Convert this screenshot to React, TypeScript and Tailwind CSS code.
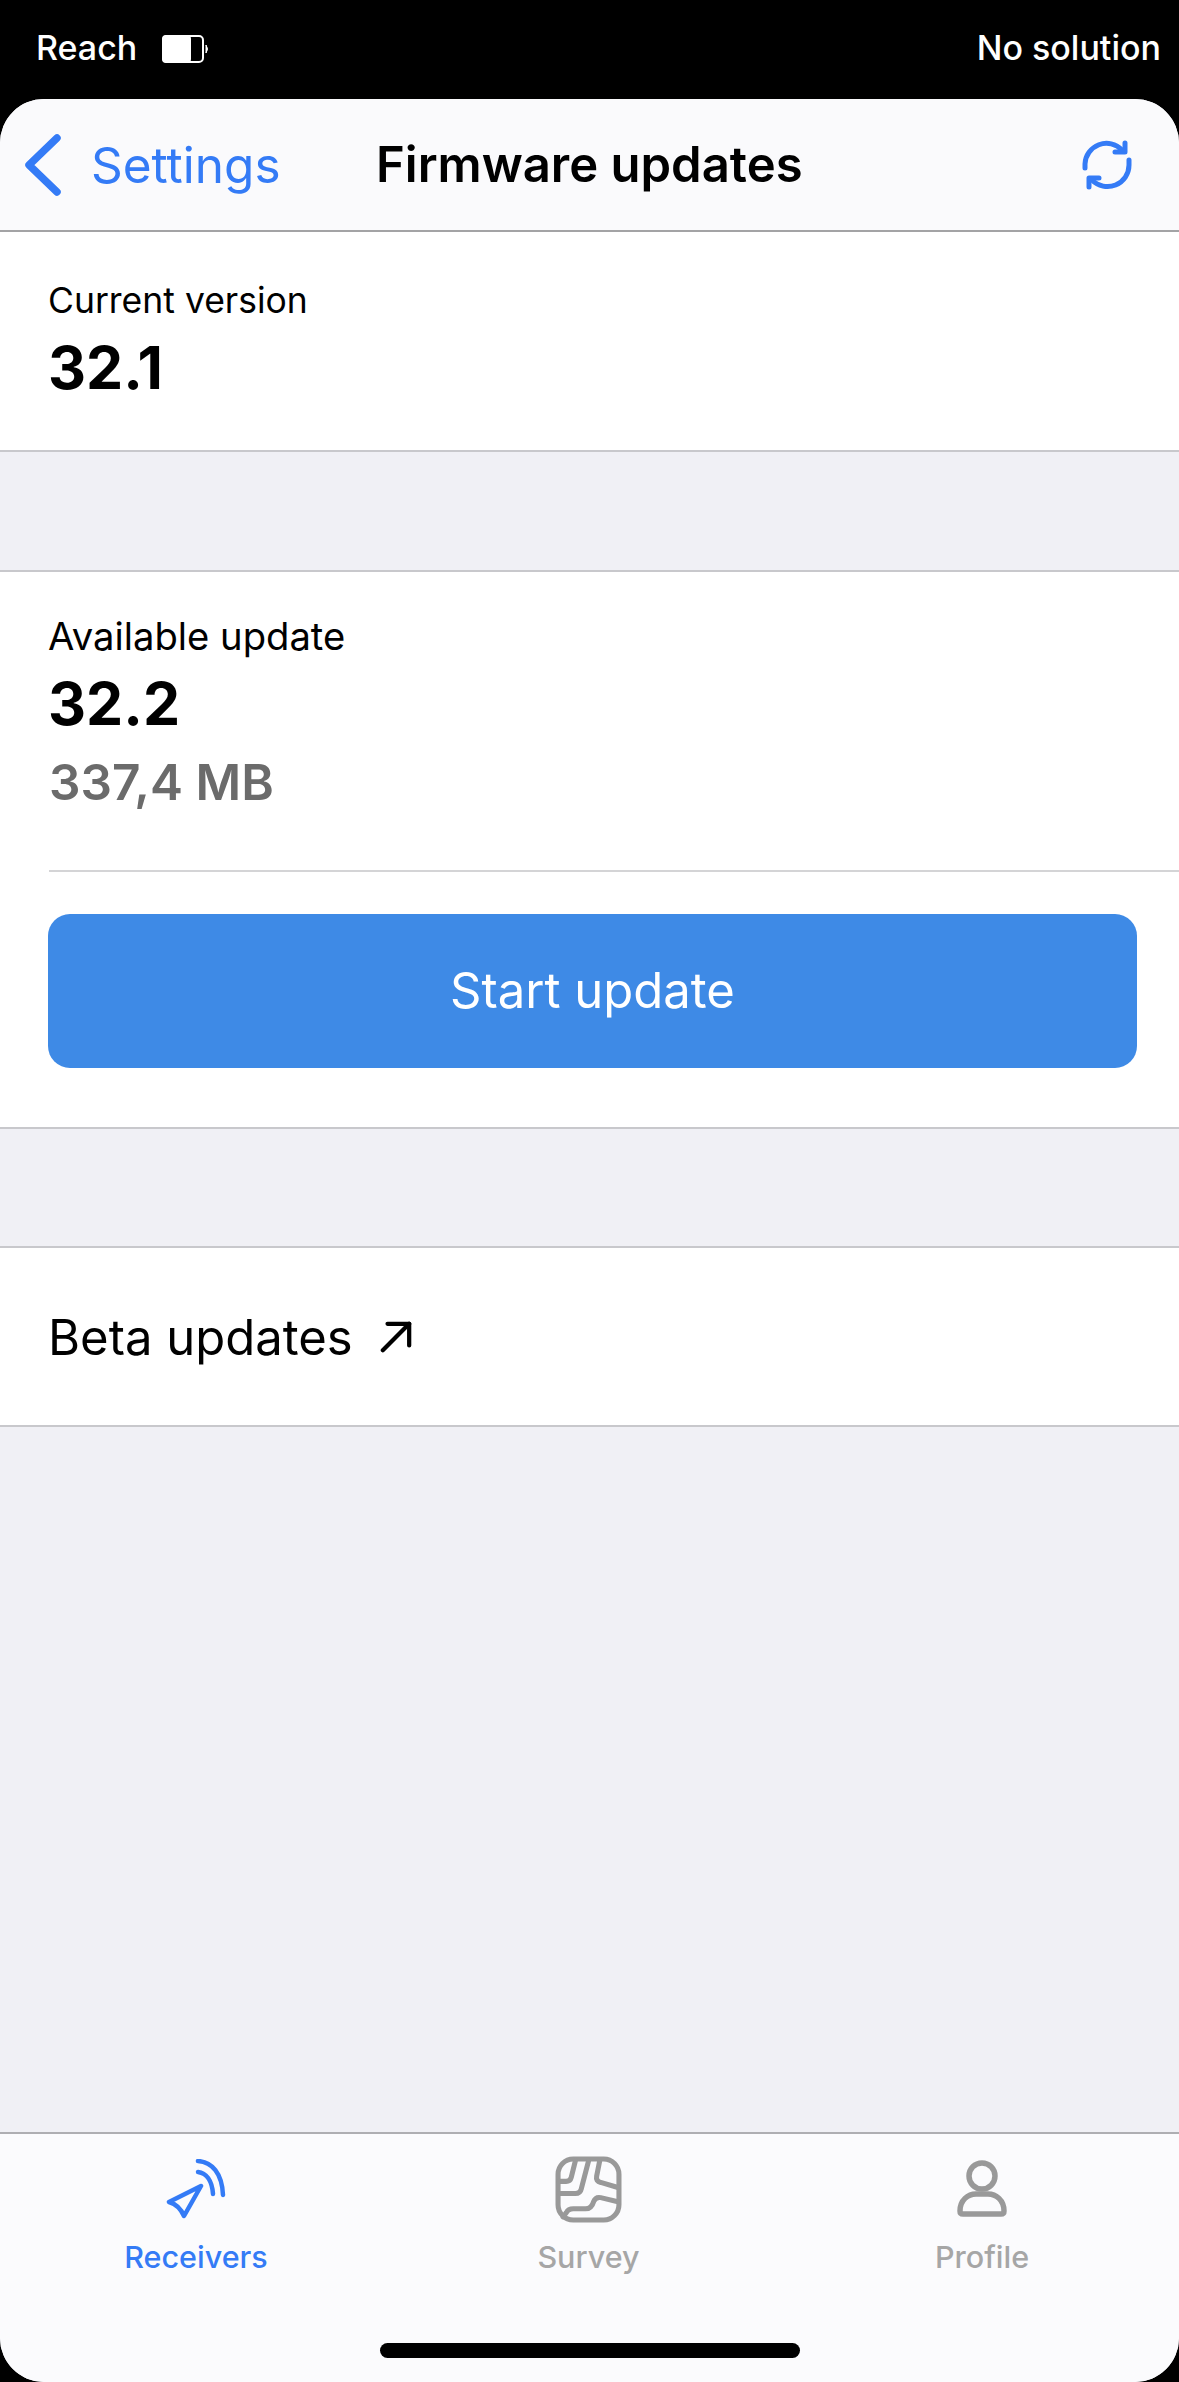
const font = { fontFamily: "Inter, 'Liberation Sans', sans-serif" };

function Back() {
  return (
    <svg width="40" height="62" viewBox="0 0 40 62" fill="none" className="shrink-0">
      <path d="M33 4 L5 31 L33 58" stroke="#347bf6" strokeWidth="7.5" strokeLinecap="round" strokeLinejoin="round" />
    </svg>
  );
}

function Refresh() {
  return (
    <svg width="50" height="50" viewBox="0 0 50 50" fill="none">
      <path d="M3 28 V24 A21.5 21.5 0 0 1 40 10" stroke="#347bf6" strokeWidth="5" strokeLinecap="round" />
      <path d="M43 3 V12 H33" stroke="#347bf6" strokeWidth="5" strokeLinecap="round" strokeLinejoin="round" />
      <path d="M47 20 V25 A21.5 21.5 0 0 1 10 40" stroke="#347bf6" strokeWidth="5" strokeLinecap="round" />
      <path d="M7 47 V38 H17" stroke="#347bf6" strokeWidth="5" strokeLinecap="round" strokeLinejoin="round" />
    </svg>
  );
}

function Receivers() {
  return (
    <svg width="60" height="60" viewBox="0 0 60 60" fill="none" stroke="#347bf6" strokeWidth="4.5" strokeLinecap="round" strokeLinejoin="round">
      <path d="M32 2 C46 3 56 14 57 36" />
      <path d="M32 13 C40 14 46 21 47 35" />
      <path d="M35 27 L3 43 C10 45 15 50 18 57 Z" />
    </svg>
  );
}

function Survey() {
  return (
    <svg width="67" height="67" viewBox="0 0 66 66" fill="none" stroke="#999999" strokeWidth="5" strokeLinecap="round" strokeLinejoin="round">
      <rect x="3" y="3" width="60" height="60" rx="15" />
      <path d="M20 5 L16 21 Q15 25 11 25 H4" />
      <path d="M33 5 L26 32 Q25 37 20 37 H4" />
      <path d="M44 5 L41 20 Q40 25 45 26 L62 31" />
      <path d="M62 45 L45 41 Q40 40 38 45 Q36 52 30 52 H18 Q13 52 11 56 L8 60" />
    </svg>
  );
}

function Profile() {
  return (
    <svg width="50" height="60" viewBox="0 0 50 60" fill="none" stroke="#999999" strokeWidth="5.5" strokeLinecap="round" strokeLinejoin="round">
      <circle cx="25" cy="17" r="13" />
      <path d="M3 52 C3 41 11 35 19 35 H31 C39 35 47 41 47 52 Q47 55 44 55 H6 Q3 55 3 52 Z" />
    </svg>
  );
}

function Tab({ icon, label, active }: { icon: React.ReactNode; label: string; active?: boolean }) {
  return (
    <div className="flex flex-col items-center">
      <div className="h-[66px] flex items-center justify-center">{icon}</div>
      <span className={`mt-[17px] text-[30.5px] leading-[36px] font-medium ${active ? "text-[#347bf6]" : "text-[#a6a6a6]"}`}>{label}</span>
    </div>
  );
}

export default function App() {
  return (
    <div style={font} className="h-[2382px] w-[1179px] bg-black flex flex-col overflow-hidden">
      <div className="h-[99px] shrink-0 flex items-start justify-between pt-[28px] pl-[36px] pr-[18px] text-white text-[34px] leading-[40px] font-medium">
        <div className="flex items-center gap-[25px]">
          <span>Reach</span>
          <svg width="48" height="28" viewBox="0 0 48 28" fill="none" className="mt-[1px]">
            <rect x="1" y="1" width="40" height="26" rx="4" fill="#000" stroke="#fff" strokeWidth="2" />
            <rect x="0" y="0" width="29" height="28" rx="4" fill="#fff" />
            <path d="M44 10 Q47 14 44 18 Z" fill="#fff" stroke="#fff" strokeWidth="1" />
          </svg>
        </div>
        <span>No solution</span>
      </div>
      <div className="flex-1 flex flex-col rounded-[44px] overflow-hidden bg-[#f0f0f5]">
        <div className="h-[133px] shrink-0 bg-[#fafafc] border-b-2 border-[#a3a3a5] relative flex items-center pl-[24px] pr-[47px] justify-between">
          <div className="flex items-center gap-[27px]">
            <Back />
            <span className="text-[49.5px] leading-[56px] text-[#347bf6]">Settings</span>
          </div>
          <span className="absolute left-[376px] top-[36px] text-[49px] leading-[60px] font-semibold text-black">Firmware updates</span>
          <Refresh />
        </div>
        <div className="h-[220px] shrink-0 bg-white border-b-2 border-[#c8c8cc] pl-[48px] pt-[47px]">
          <div className="text-[35.5px] leading-[44px] text-black">Current version</div>
          <div className="mt-[10px] text-[59px] leading-[70px] font-bold text-black">32.1</div>
        </div>
        <div className="h-[118px] shrink-0" />
        <div className="h-[559px] shrink-0 bg-white border-y-2 border-[#c8c8cc] pt-[42px]">
          <div className="pl-[48px] text-[38.2px] leading-[44px] text-black">Available update</div>
          <div className="pl-[48px] mt-[11px] text-[59px] leading-[70px] font-bold text-black">32.2</div>
          <div className="pl-[49px] mt-[12px] text-[49.5px] leading-[62px] font-semibold text-[#6b6b6b]">337,4 MB</div>
          <div className="ml-[49px] mt-[57px] border-t-2 border-[#d4d4d6]" />
          <div className="ml-[48px] mr-[42px] mt-[42px] h-[154px] rounded-[22px] bg-[#3e8ae6] flex items-center justify-center text-white text-[49px]">
            Start update
          </div>
        </div>
        <div className="h-[117px] shrink-0" />
        <div className="h-[181px] shrink-0 bg-white border-y-2 border-[#c8c8cc] pl-[48px] flex items-center gap-[27px]">
          <span className="text-[49px] leading-[60px] mt-[2px] text-black">Beta updates</span>
          <svg width="32" height="32" viewBox="0 0 34 34" fill="none" stroke="#000" strokeWidth="4.5" strokeLinecap="round" strokeLinejoin="round">
            <path d="M3 31 L31 3" />
            <path d="M8 3 H31 V26" />
          </svg>
        </div>
        <div className="flex-1" />
        <div className="h-[250px] shrink-0 bg-[#fbfbfd] border-t-2 border-[#aeaeb2] relative">
          <div className="grid grid-cols-[392px_393px_394px] pt-[22px]">
            <Tab icon={<Receivers />} label="Receivers" active />
            <Tab icon={<Survey />} label="Survey" />
            <Tab icon={<Profile />} label="Profile" />
          </div>
          <div className="absolute left-[380px] top-[209px] w-[420px] h-[15px] rounded-full bg-black" />
        </div>
      </div>
    </div>
  );
}
